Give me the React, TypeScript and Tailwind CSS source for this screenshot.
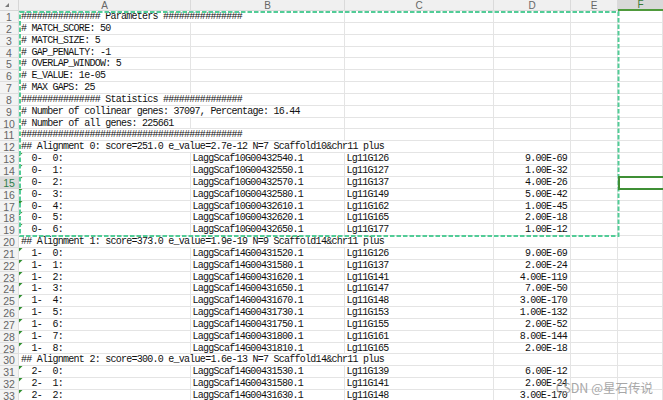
import React from "react";

type Row = { a: string; b?: string; c?: string; d?: string; span?: number; tri?: boolean };

const rows: Row[] = [
  { a: "############### Parameters ###############", span: 2 },
  { a: "# MATCH_SCORE: 50" },
  { a: "# MATCH_SIZE: 5" },
  { a: "# GAP_PENALTY: -1" },
  { a: "# OVERLAP_WINDOW: 5" },
  { a: "# E_VALUE: 1e-05" },
  { a: "# MAX GAPS: 25" },
  { a: "############### Statistics ###############", span: 2 },
  { a: "# Number of collinear genes: 37097, Percentage: 16.44", span: 2 },
  { a: "# Number of all genes: 225661" },
  { a: "##########################################", span: 2 },
  { a: "## Alignment 0: score=251.0 e_value=2.7e-12 N=7 Scaffold10&chr11 plus", span: 3 },
  { a: "  0-  0:", b: "LaggScaf10G00432540.1", c: "Lg11G126", d: "9.00E-69", tri: true },
  { a: "  0-  1:", b: "LaggScaf10G00432550.1", c: "Lg11G127", d: "1.00E-32", tri: true },
  { a: "  0-  2:", b: "LaggScaf10G00432570.1", c: "Lg11G137", d: "4.00E-26", tri: true },
  { a: "  0-  3:", b: "LaggScaf10G00432580.1", c: "Lg11G149", d: "5.00E-42", tri: true },
  { a: "  0-  4:", b: "LaggScaf10G00432610.1", c: "Lg11G162", d: "1.00E-45", tri: true },
  { a: "  0-  5:", b: "LaggScaf10G00432620.1", c: "Lg11G165", d: "2.00E-18", tri: true },
  { a: "  0-  6:", b: "LaggScaf10G00432650.1", c: "Lg11G177", d: "1.00E-12", tri: true },
  { a: "## Alignment 1: score=373.0 e_value=1.9e-19 N=9 Scaffold14&chr11 plus", span: 3 },
  { a: "  1-  0:", b: "LaggScaf14G00431520.1", c: "Lg11G126", d: "9.00E-69", tri: true },
  { a: "  1-  1:", b: "LaggScaf14G00431580.1", c: "Lg11G137", d: "2.00E-24", tri: true },
  { a: "  1-  2:", b: "LaggScaf14G00431620.1", c: "Lg11G141", d: "4.00E-119", tri: true },
  { a: "  1-  3:", b: "LaggScaf14G00431650.1", c: "Lg11G147", d: "7.00E-50", tri: true },
  { a: "  1-  4:", b: "LaggScaf14G00431670.1", c: "Lg11G148", d: "3.00E-170", tri: true },
  { a: "  1-  5:", b: "LaggScaf14G00431730.1", c: "Lg11G153", d: "1.00E-132", tri: true },
  { a: "  1-  6:", b: "LaggScaf14G00431750.1", c: "Lg11G155", d: "2.00E-52", tri: true },
  { a: "  1-  7:", b: "LaggScaf14G00431800.1", c: "Lg11G161", d: "8.00E-144", tri: true },
  { a: "  1-  8:", b: "LaggScaf14G00431810.1", c: "Lg11G165", d: "2.00E-18", tri: true },
  { a: "## Alignment 2: score=300.0 e_value=1.6e-13 N=7 Scaffold14&chr11 plus", span: 3 },
  { a: "  2-  0:", b: "LaggScaf14G00431530.1", c: "Lg11G139", d: "6.00E-12", tri: true },
  { a: "  2-  1:", b: "LaggScaf14G00431580.1", c: "Lg11G141", d: "2.00E-24", tri: true },
  { a: "  2-  2:", b: "LaggScaf14G00431630.1", c: "Lg11G148", d: "3.00E-170", tri: true },
];

const spanClass: Record<number, string> = { 1: "", 2: "col-span-2", 3: "col-span-3" };
const colLetters = ["A", "B", "C", "D", "E", "F"];

function Tri() {
  return (
    <svg className="absolute left-[0px] top-[0px]" width="4" height="4" viewBox="0 0 4 4">
      <polygon points="0,0 3.5,0 0,3.5" fill="#2f8f2f" />
    </svg>
  );
}

export default function App() {
  return (
    <div className="relative w-[663px] h-[400px] overflow-hidden bg-white">
      <div className="grid grid-cols-[19px_172px_154px_149px_77px_47px_1fr] grid-rows-[11px_repeat(33,11.85px)] font-['Liberation_Mono',monospace] text-[10px] tracking-[-0.74px] leading-[12.5px] text-[#111]">
        {/* header row */}
        <div className="relative bg-[#f0f0f0] border-r border-b border-[#d6d6d6]">
          <svg className="absolute left-[5px] top-[3px]" width="4" height="4" viewBox="0 0 4 4">
            <polygon points="4,0 4,4 0,4" fill="#7a7a7a" />
          </svg>
        </div>
        {colLetters.map((l) => (
          <div
            key={l}
            className={
              l === "F"
                ? "bg-[#d9d9d9] border-b-2 border-[#4f9a3c] text-center font-['Liberation_Sans',sans-serif] tracking-normal text-[10px] leading-[10px] text-[#3a7a3a]"
                : "bg-[#f0f0f0] border-r border-b border-[#dadada] text-center font-['Liberation_Sans',sans-serif] tracking-normal text-[10px] leading-[11px] text-[#666]"
            }
          >
            {l}
          </div>
        ))}
        {rows.map((r, i) => {
          const span = r.span ?? 1;
          const content = [r.a, r.b, r.c, r.d, "", ""];
          const cells = [];
          cells.push(
            <div
              key="a"
              className={`relative ${spanClass[span]} border-r border-b border-[#e4e4e4] pl-[2px] whitespace-pre overflow-visible`}
            >
              {r.tri && <Tri />}
              {r.a}
            </div>
          );
          for (let c = span; c < 6; c++) {
            const isD = c === 3;
            cells.push(
              <div
                key={c}
                className={
                  isD
                    ? "border-r border-b border-[#e4e4e4] pr-[3px] text-right whitespace-pre"
                    : "border-r border-b border-[#e4e4e4] pl-[1.5px] whitespace-pre"
                }
              >
                {content[c]}
              </div>
            );
          }
          const hl = i + 1 === 15;
          return (
            <React.Fragment key={i}>
              <div
                className={
                  hl
                    ? "bg-[#dcdcdc] border-r border-b border-[#d0d0d0] text-center font-['Liberation_Sans',sans-serif] tracking-normal text-[10.5px] leading-[12px] text-[#2f7d4a]"
                    : "bg-[#f3f3f3] border-r border-b border-[#dedede] text-center font-['Liberation_Sans',sans-serif] tracking-normal text-[10.5px] leading-[12px] text-[#666]"
                }
              >
                {i + 1}
              </div>
              {cells}
            </React.Fragment>
          );
        })}
      </div>

      {/* copy marquee */}
      <svg className="absolute left-0 top-0 pointer-events-none" width="663" height="400">
        <rect x="20" y="12" width="598.5" height="224" fill="none" stroke="#52cc97" strokeWidth="2" strokeDasharray="4.5 2" />
      </svg>

      {/* selected cell */}
      <div className="absolute left-[618px] top-[176px] w-[60px] h-[14px] border-2 border-[#3f8f35] pointer-events-none" />

      {/* watermark */}
      <div className="absolute right-[10px] bottom-[5px] font-['Noto_Sans_CJK_SC',sans-serif] text-[12.5px] leading-[14px] text-[#9e9e9e] opacity-90 pointer-events-none">
        CSDN @星石传说
      </div>
    </div>
  );
}
